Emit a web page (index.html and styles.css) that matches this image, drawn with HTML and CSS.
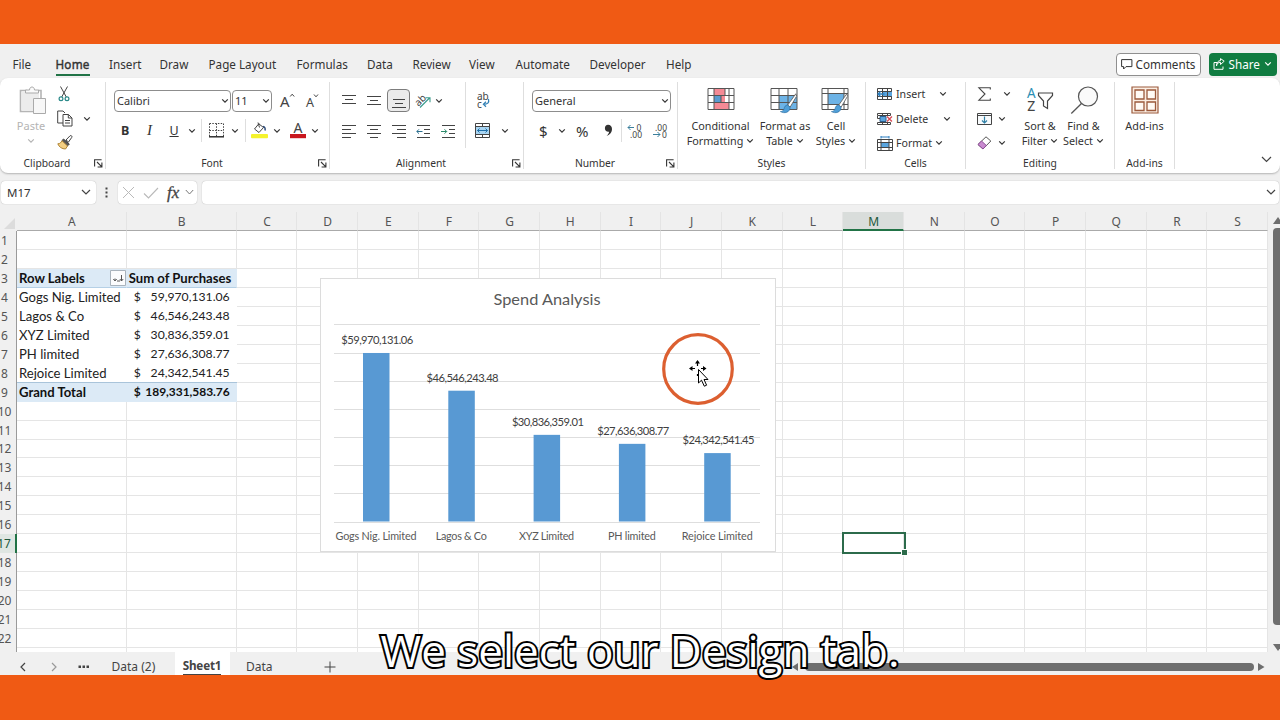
FILE: index.html
```html
<!DOCTYPE html>
<html lang="en">
<head>
  <meta charset="UTF-8">
  <meta name="viewport" content="width=device-width, initial-scale=1.0">
  <title>Spend Analysis</title>
  <link rel="stylesheet" href="styles.css">
</head>
<body>
  <!-- shared icons -->
  <svg class="defs">
    <symbol id="chev" viewBox="0 0 8 6"><path d="M1.2 1.4 4 4.2 6.8 1.4" fill="none" stroke="currentColor" stroke-width="1.2"/></symbol>
    <symbol id="launch" viewBox="0 0 9 9"><path d="M.6 7.5V.8h7M3 3l4.6 4.6M7.9 3.6V8H3.6" fill="none" stroke="#333" stroke-width="1.1"/></symbol>
    <symbol id="brush" viewBox="0 0 20 26"><path d="M19 1 9 15l3 2.5L20 4z" fill="#fff" stroke="#555"/><path d="M9 15c-3 0-4 2-4.500 4.500C4 22 2 23 0 23c5 3 12 1 12-5.500z" fill="#4f9fd8" stroke="#2c6da0" stroke-width=".8"/></symbol>
  </svg>

  <div class="screen">
    <div class="tabs">
      <span>File</span>
      <span class="active">Home</span>
      <span>Insert</span>
      <span>Draw</span>
      <span>Page Layout</span>
      <span>Formulas</span>
      <span>Data</span>
      <span>Review</span>
      <span>View</span>
      <span>Automate</span>
      <span>Developer</span>
      <span>Help</span>
      <button class="comments">
        <svg width="12" height="11" viewBox="0 0 12 11"><path d="M.6.6h10.300v7H5L2.600 10V7.600h-2z" fill="none" stroke="#333"/></svg>
        Comments
      </button>
      <button class="share">
        <svg width="12" height="12" viewBox="0 0 12 12"><path d="M4 4.500H1v6.800h9V8.500M3.500 8c.3-2.500 1.800-3.700 4-3.700V6.500l3.700-3.300L7.500.6v2C5 2.700 3.500 4.500 3.500 8z" fill="none" stroke="#fff"/></svg>
        Share
        <svg class="chev"><use href="#chev"/></svg>
      </button>
    </div>

    <div class="ribbon">
      <section class="group clipboard">
        <div class="tools">
          <div class="paste">
            <svg width="28" height="30" viewBox="0 0 28 30"><path d="M8 4.500H1.500v21H14M19 4.500h3V12" fill="none" stroke="#b5b5b5" stroke-width="1.600"/><path d="M3 6h17v6h-6v12H3z" fill="#ececec"/><path d="M6.500 7V4h4c0-4 5-4 5 0h4v3z" fill="#fafafa" stroke="#aaa"/><path d="M14.500 12.500h12v15h-12z" fill="#f7f7f7" stroke="#aaa"/></svg>
            <span>Paste</span>
            <svg class="chev"><use href="#chev"/></svg>
          </div>
          <div class="clip-col">
            <svg width="12" height="16" viewBox="0 0 12 16"><path d="M2.500.5 8.300 11M9.500.5 3.700 11" stroke="#444" fill="none"/><circle cx="3" cy="12.700" r="1.900" fill="none" stroke="#2b8a8a" stroke-width="1.200"/><circle cx="9" cy="12.700" r="1.900" fill="none" stroke="#2b8a8a" stroke-width="1.200"/></svg>
            <div class="copy">
              <svg width="16" height="17" viewBox="0 0 16 17"><path d="M6 13H.7V1H6l2 2" fill="none" stroke="#444"/><path d="M6 4.500h5.500L15 8v8H6zM11.300 4.500V8H15M8 10.500h5M8 13h5" fill="#fff" stroke="#444"/></svg>
              <svg class="chev"><use href="#chev"/></svg>
            </div>
            <svg width="16" height="15" viewBox="0 0 16 15"><path d="m9 5 4-4.200c1-.8 2.600.4 1.700 1.700L11.500 7z" fill="#fff" stroke="#444"/><path d="m6.500 4 5.800 5-1.600 1.800L5 5.500z" fill="#555" stroke="#444"/><path d="M5 5.800 10.500 11 8.500 14C5 14 2 12 .8 8.800 3 8.800 4 7.500 5 5.800z" fill="#f3cf83" stroke="#b08536"/></svg>
          </div>
        </div>
        <div class="label"><span>Clipboard</span><svg class="launch"><use href="#launch"/></svg></div>
      </section>

      <section class="group font">
        <div class="row row-top font-top">
          <div class="select">Calibri <svg class="chev"><use href="#chev"/></svg></div>
          <div class="select">11 <svg class="chev"><use href="#chev"/></svg></div>
          <svg width="18" height="22" viewBox="0 0 18 22"><text x="1" y="17" font-size="15" fill="#444">A</text><path d="m11.200 6.500 2-2.300 2 2.300" fill="none" stroke="#444"/></svg>
          <svg width="18" height="22" viewBox="0 0 18 22"><text x="2" y="17" font-size="12.500" fill="#444">A</text><path d="m10 4.500 2 2.300 2-2.300" fill="none" stroke="#444"/></svg>
        </div>
        <div class="row row-bottom font-bottom">
          <b>B</b>
          <i>I</i>
          <u>U</u>
          <svg class="chev"><use href="#chev"/></svg>
          <hr>
          <svg width="15" height="15" viewBox="0 0 15 15"><path d="M.5.500h14M.5 7.500h14M.5.500v13M7.500.500v13M14.500.500v13" stroke="#444" stroke-dasharray="1.500 1.300" fill="none"/><path d="M0 13.800h15" stroke="#222" stroke-width="1.400"/></svg>
          <svg class="chev"><use href="#chev"/></svg>
          <hr>
          <svg width="17" height="17" viewBox="0 0 17 17"><path d="M8 1.500 3.500 7 8 10.500 12.500 5.500 8 2M7 .5l1.500 5" fill="none" stroke="#444"/><path d="M12 4.500c1.800 0 2.500 2 2 4" fill="none" stroke="#2c4a78" stroke-width="1.500"/><rect y="12" width="17" height="4.200" rx="1" fill="#f5f32c"/></svg>
          <svg class="chev"><use href="#chev"/></svg>
          <svg width="16" height="21" viewBox="0 -4 16 21"><text x="3.500" y="10.500" font-size="14" fill="#444">A</text><rect y="12" width="16" height="4.200" fill="#c8171e"/></svg>
          <svg class="chev"><use href="#chev"/></svg>
        </div>
        <div class="label"><span>Font</span><svg class="launch"><use href="#launch"/></svg></div>
      </section>

      <section class="group alignment">
        <div class="align-tools">
          <div class="align-left">
            <div class="row row-top align-top">
              <svg width="14" height="14" viewBox="0 0 14 14"><path d="M0 1.500h14M3 5.500h8M0 9.500h14" stroke="#444"/></svg>
              <svg width="14" height="14" viewBox="0 0 14 14"><path d="M0 2.500h14M3 6.500h8M0 10.500h14" stroke="#444"/></svg>
              <span class="pressed"><svg width="14" height="14" viewBox="0 0 14 14"><path d="M1 5.500h12M3 9.500h8M0 13.500h14" stroke="#444"/></svg></span>
              <svg width="18" height="17" viewBox="0 0 18 17"><text x="1" y="12" font-size="10" fill="#444" transform="rotate(-45 6 9)">ab</text><path d="m6 15.500 9.500-9.500M11.500 5.800H16v4.500" fill="none" stroke="#3b9c8c" stroke-width="1.100"/></svg>
              <svg class="chev"><use href="#chev"/></svg>
            </div>
            <div class="row row-bottom align-bottom">
              <svg width="14" height="14" viewBox="0 0 14 14"><path d="M0 1.500h14M0 5.500h9M0 9.500h14M0 13.500h9" stroke="#444"/></svg>
              <svg width="14" height="14" viewBox="0 0 14 14"><path d="M0 1.500h14M3 5.500h8M0 9.500h14M3 13.500h8" stroke="#444"/></svg>
              <svg width="14" height="14" viewBox="0 0 14 14"><path d="M0 1.500h14M5 5.500h9M0 9.500h14M5 13.500h9" stroke="#444"/></svg>
              <svg width="14" height="14" viewBox="0 0 14 14"><path d="M1 1.500h13M8 5.500h6M8 9.500h6M1 13.500h13" stroke="#444"/><path d="M6.500 7.500H.8M3 5.300.8 7.500 3 9.700" stroke="#2c6f8f" fill="none"/></svg>
              <svg width="14" height="14" viewBox="0 0 14 14"><path d="M1 1.500h13M8 5.500h6M8 9.500h6M1 13.500h13" stroke="#444"/><path d="M0 7.500h5.700M3.500 5.300 5.700 7.500 3.500 9.700" stroke="#2b8a6a" fill="none"/></svg>
            </div>
          </div>
          <div class="align-right">
            <div class="row row-top wrap-row">
              <svg width="17" height="26" viewBox="0 0 17 26"><text x="2" y="12" font-size="10" fill="#444">ab</text><text x="2" y="19.500" font-size="10" fill="#444">c</text><path d="M13.500 11c1 4-1 5.300-5 5.300M11 13.800l-2.600 2.500L11 18.800" fill="none" stroke="#2f7fb5" stroke-width="1.200"/></svg>
            </div>
            <div class="row row-bottom wrap-row">
              <svg width="15" height="15" viewBox="0 0 15 15"><path d="M.5.500h14v14H.5z" fill="#fff" stroke="#444"/><path d="M1 4h13v7H1z" fill="#a9d5f2"/><path d="M.5 3.500h14M.5 11.500h14M7.500.500v3M7.500 11.500v3" stroke="#444"/><path d="M2.500 7.500h10M4.500 5.500l-2 2 2 2M10.500 5.500l2 2-2 2" fill="none" stroke="#1f6fa8"/></svg>
              <svg class="chev"><use href="#chev"/></svg>
            </div>
          </div>
        </div>
        <div class="label"><span>Alignment</span><svg class="launch"><use href="#launch"/></svg></div>
      </section>

      <section class="group number">
        <div class="row row-top num-top">
          <div class="select">General <svg class="chev"><use href="#chev"/></svg></div>
        </div>
        <div class="row row-bottom num-bottom">
          <span class="sym">$</span>
          <svg class="chev"><use href="#chev"/></svg>
          <span class="sym">%</span>
          <svg width="9" height="13" viewBox="0 0 9 13"><path d="M4 .8C6.500.8 8 2.500 8 5c0 3.500-2.500 6-5.500 7 1.600-1.600 2.500-3 2.600-4.300C2.500 8 .9 6.500.9 4.200.9 2.200 2.200.8 4 .8z" fill="#333"/></svg>
          <hr>
          <svg width="17" height="20" viewBox="0 0 17 20"><text x="9.500" y="9.500" font-size="8.500" fill="#444">0</text><text x="3" y="17.200" font-size="8.500" fill="#444">.00</text><path d="M7 6.500H1M3.500 4 1 6.500 3.500 9" fill="none" stroke="#3b7f9c"/></svg>
          <svg width="17" height="20" viewBox="0 0 17 20"><text x="3" y="9.500" font-size="8.500" fill="#444">.00</text><text x="10" y="17.200" font-size="8.500" fill="#444">0</text><path d="M1 13.500h7M5.500 11 8 13.500 5.500 16" fill="none" stroke="#3b7f9c"/></svg>
        </div>
        <div class="label"><span>Number</span><svg class="launch"><use href="#launch"/></svg></div>
      </section>

      <section class="group styles">
        <div class="big-tools">
          <div class="big">
            <svg width="28" height="28" viewBox="0 -1 28 28"><path d="M1 1.500h26v21H1z" fill="#fff"/><path d="M7 1.500h11v7H7zM7 15.500h11v7H7zM14 8.500h4v7h-4z" fill="#f58a95"/><path d="M7 8.500h7v7H7z" fill="#5a9bd0"/><path d="M18 15.500h4v7h-4z" fill="#f58a95"/><path d="M1 1.500h26v21H1zM1 8.500h26M1 15.500h26M7 1.500v21M18 1.500v7M14 8.500v7M22 1.500v21" fill="none" stroke="#555"/></svg>
            <span>Conditional</span>
            <span>Formatting <svg class="chev"><use href="#chev"/></svg></span>
          </div>
          <div class="big">
            <svg width="30" height="28" viewBox="0 -1 30 28"><path d="M1 1.500h26v21H1z" fill="#fff"/><path d="M9 8.500h18v14H9z" fill="#6db3e6"/><path d="M1 1.500h26v21H1zM1 8.500h26M1 15.500h26M9 1.500v21M18 1.500v21" fill="none" stroke="#555"/><use href="#brush" x="8" y="6" width="21" height="21"/></svg>
            <span>Format as</span>
            <span>Table <svg class="chev"><use href="#chev"/></svg></span>
          </div>
          <div class="big">
            <svg width="30" height="28" viewBox="0 -1 30 28"><path d="M1 1.500h26v21H1z" fill="#fff"/><path d="M7 6.500h16v11H7z" fill="#6db3e6"/><path d="M1 1.500h26v21H1zM1 6.500h26M1 17.500h26M7 1.500v21M23 1.500v21" fill="none" stroke="#555"/><use href="#brush" x="8" y="6" width="21" height="21"/></svg>
            <span>Cell</span>
            <span>Styles <svg class="chev"><use href="#chev"/></svg></span>
          </div>
        </div>
        <div class="label"><span>Styles</span></div>
      </section>

      <section class="group cells">
        <div class="line-tools">
          <div class="line insert">
            <svg width="16" height="14" viewBox="0 0 16 14"><path d="M.5 1.500h14v11H.5z" fill="#fff" stroke="#444"/><path d="M6 4.500h9v5H6z" fill="#5aa5de"/><path d="M.5 4.500h14M.5 9.500h14M5.500 1.500v11M10.500 1.500v11" stroke="#444" fill="none"/><path d="M7.500 7H1M3.500 4.500 1 7l2.500 2.500" stroke="#2c7fc0" stroke-width="1.400" fill="none"/></svg>
            <span>Insert</span><svg class="chev"><use href="#chev"/></svg>
          </div>
          <div class="line delete">
            <svg width="16" height="14" viewBox="0 0 16 14"><path d="M.5 1.500h13v2H.5zM.5 10.500h13v2H.5zM5.500 1.500v2M10.500 1.500v2M5.500 10.500v2M10.500 10.500v2" fill="none" stroke="#444"/><path d="M3 4.500h6v5H3z" fill="#5aa5de" stroke="#2c5f8f"/><path d="M.5 4v2.500H3" fill="none" stroke="#444"/><path d="m10 4.500 5 5m0-5-5 5" stroke="#d84a54" stroke-width="1.300"/></svg>
            <span>Delete</span><svg class="chev"><use href="#chev"/></svg>
          </div>
          <div class="line format">
            <svg width="16" height="15" viewBox="0 0 16 15"><path d="M.5 3.500h15v11H.5z" fill="#fff" stroke="#444"/><path d="M4 6.500h8v5H4z" fill="#5aa5de"/><path d="M.5 6.500h15M.5 11.500h15M4 3.500v11M12 3.500v11" stroke="#444"/><path d="M4 1h8M4 0v2.500M12 0v2.500" stroke="#2c7fc0"/></svg>
            <span>Format</span><svg class="chev"><use href="#chev"/></svg>
          </div>
        </div>
        <div class="label"><span>Cells</span></div>
      </section>

      <section class="group editing">
        <div class="edit-tools">
          <div class="edit-col">
            <div class="edit-row sum"><svg width="13" height="14" viewBox="0 0 13 14"><path d="M12.300 2.500V.8H.9L7 7 .9 13.200h11.400v-1.800" fill="none" stroke="#444" stroke-width="1.100"/></svg><svg class="chev"><use href="#chev"/></svg></div>
            <div class="edit-row"><svg width="15" height="14" viewBox="0 0 15 14"><path d="M.5 1.500h14v11H.5zM.5 3.500h14" fill="#f7fafc" stroke="#444"/><path d="M7.500 4.500v6.500M5 8.500 7.500 11 10 8.500" fill="none" stroke="#2f7fa5" stroke-width="1.200"/></svg><svg class="chev"><use href="#chev"/></svg></div>
            <div class="edit-row"><svg width="15" height="14" viewBox="0 0 15 14"><path d="M9 .8 13.800 5 6 13 1 8.500z" fill="#fff" stroke="#555"/><path d="M4.500 5 9.300 9.500 6 13 1 8.500z" fill="#c98bd0" stroke="#8f4f99"/></svg><svg class="chev"><use href="#chev"/></svg></div>
          </div>
          <div class="big">
            <svg width="28" height="28" viewBox="0 0 28 28"><text x="1" y="12" font-size="13.500" fill="#2b8fb5">A</text><text x="1.200" y="25" font-size="14" fill="#444">Z</text><path d="M12.500 7h14v2.500L21.500 15v7.500L17.500 20v-5l-5-5.500z" fill="none" stroke="#444" stroke-width="1.200"/></svg>
            <span>Sort &amp;</span>
            <span>Filter <svg class="chev"><use href="#chev"/></svg></span>
          </div>
          <div class="big">
            <svg width="28" height="28" viewBox="0 0 28 28"><circle cx="18" cy="10.500" r="9.500" fill="#fafafa" stroke="#555" stroke-width="1.200"/><path d="M11.500 17.500 1.300 27.500" stroke="#555" stroke-width="1.300"/></svg>
            <span>Find &amp;</span>
            <span>Select <svg class="chev"><use href="#chev"/></svg></span>
          </div>
        </div>
        <div class="label"><span>Editing</span></div>
      </section>

      <section class="group addins">
        <div class="big">
          <svg width="28" height="28" viewBox="0 0 28 28"><path d="M1 1h26v26H1z" fill="#fbeee3" stroke="#9c5a3c" stroke-width="1.200"/><path d="M4 4h9v9H4zM16 4h8.500v9H16zM4 16h9v8.500H4zM16 16h8.500v8.500H16z" fill="#fffaf5" stroke="#9c5a3c" stroke-width="1.300"/></svg>
          <span>Add-ins</span>
        </div>
        <div class="label"><span>Add-ins</span></div>
      </section>

      <svg class="collapse" width="11" height="7" viewBox="0 0 11 7"><path d="m1 1 4.500 4.500L10 1" fill="none" stroke="#444" stroke-width="1.200"/></svg>
    </div>

    <div class="formula-bar">
      <div class="name-box">M17 <svg width="10" height="7" viewBox="0 0 10 7"><path d="m1 1 4 4 4-4" fill="none" stroke="#444" stroke-width="1.200"/></svg></div>
      <svg class="dots" width="3" height="11" viewBox="0 0 3 11"><path d="M.5.500h2v2h-2zM.5 4.500h2v2h-2zM.5 8.500h2v2h-2z" fill="#444"/></svg>
      <div class="fx-box">
        <svg width="13" height="13" viewBox="0 0 13 13"><path d="m1 1 11 11M12 1 1 12" stroke="#b9b9b9"/></svg>
        <svg width="16" height="12" viewBox="0 0 16 12"><path d="m1 6.500 4.500 4.500L15 1" fill="none" stroke="#b9b9b9" stroke-width="1.100"/></svg>
        <em>fx</em>
        <svg width="9" height="7" viewBox="0 0 9 7"><path d="m.8 1 3.700 4 3.700-4" fill="none" stroke="#777"/></svg>
      </div>
      <div class="formula"><svg width="10" height="7" viewBox="0 0 10 7"><path d="m1 1 4 4 4-4" fill="none" stroke="#444" stroke-width="1.200"/></svg></div>
    </div>

    <div class="workspace">
      <div class="sheet" id="sheet"></div>
      <div class="vscroll">
        <svg width="10" height="7" viewBox="0 0 10 7"><path d="M5 0l5 7H0z" fill="#6e6e6e"/></svg>
        <div class="vthumb"></div>
        <svg width="10" height="7" viewBox="0 0 10 7"><path d="M5 7l5-7H0z" fill="#6e6e6e"/></svg>
      </div>

      <div class="active-cell"></div>
      <svg class="chart" id="chart" width="456" height="274" viewBox="0 0 456 274"></svg>
    </div>

    <div class="bottom-bar">
      <svg width="6" height="10" viewBox="0 0 6 10"><path d="M5 1 1 5l4 4" fill="none" stroke="#444" stroke-width="1.200"/></svg>
      <svg width="6" height="10" viewBox="0 0 6 10"><path d="m1 1 4 4-4 4" fill="none" stroke="#999" stroke-width="1.200"/></svg>
      <svg width="12" height="4" viewBox="0 0 12 4"><path d="M.5.500h2.500V3H.5zM4.500.500H7V3H4.500zM8.500.500H11V3H8.500z" fill="#444"/></svg>
      <span>Data (2)</span>
      <span class="current"><b>Sheet1</b></span>
      <span class="last">Data</span>
      <svg width="12" height="12" viewBox="0 0 12 12"><path d="M6 .5v11M.5 6h11" stroke="#444"/></svg>
      <svg width="7" height="8" viewBox="0 0 7 8"><path d="M0 4l6-4v8z" fill="#6e6e6e"/></svg>
      <div class="hthumb"></div>
      <svg width="7" height="8" viewBox="0 0 7 8"><path d="M6.500 4 0 0v8z" fill="#6e6e6e"/></svg>
    </div>
  </div>

  <svg class="pointer" width="74" height="74" viewBox="0 0 74 74">
    <circle cx="37" cy="37" r="34.300" fill="none" stroke="#dc5f30" stroke-width="3.200"/>
    <path d="M36.500 29v5M36.500 42v2M29 36.500h5M40 36.500h5" stroke="#000" stroke-width="1.200"/>
    <path d="m34 31.500 2.500-3.500 2.500 3.500zM31.500 34 28 36.500l3.500 2.500zM42 34l3.500 2.500L42 39z" fill="#000"/>
    <path d="M37.500 37.500V51l3-2.800 2.800 6 2.300-1-2.600-5.700h4z" fill="#fff" stroke="#000"/>
  </svg>

  <div class="caption">We select our Design tab.</div>

  <script>
    const columns = "ABCDEFGHIJKLMNOPQRS".split("");
    const rowCount = 23;
    const purchases = [
      { name: "Gogs Nig. Limited", value: 59970131.06 },
      { name: "Lagos & Co", value: 46546243.48 },
      { name: "XYZ Limited", value: 30836359.01 },
      { name: "PH limited", value: 27636308.77 },
      { name: "Rejoice Limited", value: 24342541.45 },
    ];
    const total = 189331583.76;

    function money(value) {
      return value.toLocaleString("en-US", { minimumFractionDigits: 2, maximumFractionDigits: 2 });
    }

    function addCell(className, html) {
      const cell = document.createElement("div");
      cell.className = className;
      cell.innerHTML = html || "";
      document.getElementById("sheet").appendChild(cell);
    }

    function drawSheet() {
      addCell("corner", '<svg width="11" height="11" viewBox="0 0 11 11"><path d="M11 0v11H0z" fill="#dcdcdc"/></svg>');
      columns.forEach((c) => addCell(c === "M" ? "col-head selected" : "col-head", c));

      for (let r = 1; r <= rowCount; r++) {
        addCell(r === 17 ? "row-head selected" : "row-head", r < 23 ? String(r) : "");
        columns.forEach((c) => {
          const item = purchases[r - 4];
          if (c === "A" && r === 3) {
            addCell("cell pivot-head", '<span>Row Labels</span><svg class="filter" width="16" height="16" viewBox="0 0 16 16"><path d="M.5.500h15v15H.5z" fill="#fbfcfd" stroke="#a9b3bc"/><path d="M5 8.500v2M3.300 9l1.700 2 1.700-2M7 11h3M11.500 5v6M9.800 9l1.700 2 1.700-2" fill="none" stroke="#555"/></svg>');
          } else if (c === "B" && r === 3) {
            addCell("cell pivot-head", "<span>Sum of Purchases</span>");
          } else if (c === "A" && item) {
            addCell("cell pivot", item.name.replace("&", "&amp;"));
          } else if (c === "B" && item) {
            addCell("cell pivot amount", `<span>$</span><span>${money(item.value)}</span>`);
          } else if (c === "A" && r === 9) {
            addCell("cell pivot-total", "Grand Total");
          } else if (c === "B" && r === 9) {
            addCell("cell pivot-total amount", `<span>$</span><span>${money(total)}</span>`);
          } else {
            addCell("cell");
          }
        });
      }
    }

    function drawChart() {
      const base = 243.5;
      const labelWidths = [81, 51, 55, 48, 71];
      let svg = '<rect class="frame" x=".5" y=".5" width="455" height="273"/>';
      svg += '<text class="title" x="227" y="27" textLength="107" lengthAdjust="spacingAndGlyphs">Spend Analysis</text>';
      for (let i = 0; i < 8; i++) {
        svg += `<path class="gridline" d="M14 ${Math.round(base - i * 28.15)}.5h426"/>`;
      }
      purchases.forEach((p, i) => {
        const x = 43 + i * 85.3;
        const h = p.value / 10000000 * 28.1;
        svg += `<rect class="bar" x="${x}" y="${base - h}" width="26.500" height="${h}"/>`;
        svg += `<text class="value" x="${x + 14.3}" y="${base - h - 8.700}" textLength="72">$${money(p.value)}</text>`;
        svg += `<text class="name" x="${x + 13}" y="261.500" textLength="${labelWidths[i]}">${p.name.replace("&", "&amp;")}</text>`;
      });
      document.getElementById("chart").innerHTML = svg;
    }

    drawSheet();
    drawChart();
  </script>
</body>
</html>
```

FILE: styles.css
```css
* {
  box-sizing: border-box;
}

body {
  margin: 0;
  width: 1280px;
  height: 720px;
  overflow: hidden;
  background: #f05a14;
  padding-top: 44px;
  font-family: "Noto Sans", sans-serif;
  color: #333;
  position: relative;
}

svg {
  display: block;
  overflow: visible;
}

.defs {
  display: none;
}

.screen {
  height: 631px;
  background: #f0f0f0;
  display: flex;
  flex-direction: column;
  overflow: hidden;
}

.chev {
  width: 8px;
  height: 6px;
}

/* menu tabs */
.tabs {
  height: 34px;
  flex: none;
  display: grid;
  grid-template-columns: 43px 53.500px 50.500px 49px 88px 70.500px 45.500px 56.500px 46.500px 74px 76.500px 449.500px 93px 67px;
  padding-left: 12.500px;
  align-items: center;
  font-size: 11.700px;
  white-space: nowrap;
}

.tabs span {
  justify-self: start;
  height: 22px;
  line-height: 19px;
  margin-top: 9px;
}

.tabs .active {
  -webkit-text-stroke: 0.4px #333;
  letter-spacing: 0.2px;
  height: 21px;
  margin-top: 8px;
  border-bottom: 2px solid #217346;
}

.tabs button {
  font: inherit;
  height: 23px;
  margin-top: 6px;
  display: flex;
  align-items: center;
  border-radius: 4px;
}

.comments {
  width: 85px;
  padding: 0 0 0 4px;
  gap: 3px;
  border: 1px solid #8f8f8f;
  background: #fff;
  color: #333;
}

.share {
  width: 68px;
  padding: 0 0 0 4px;
  gap: 4px;
  border: none;
  background: #107c41;
  color: #fff;
}

/* ribbon */
.ribbon {
  height: 95px;
  flex: none;
  background: #fff;
  border-radius: 8px;
  box-shadow: 0 1px 2px rgba(0, 0, 0, 0.25);
  padding-top: 4px;
  display: flex;
  font-size: 11px;
  position: relative;
}

.group {
  height: 87px;
  border-right: 1px solid #dedede;
  display: flex;
  flex-direction: column;
}

.label {
  margin-top: auto;
  height: 12px;
  display: flex;
  align-items: center;
  font-size: 10.300px;
  color: #333;
}

.label span {
  flex: 1;
  text-align: center;
}

.launch {
  width: 9px;
  height: 9px;
  margin: 1px 2px 0 0;
}

.row {
  display: grid;
  align-items: center;
}

.row-top {
  height: 37px;
}

.row-bottom {
  height: 25px;
  margin-top: -1px;
}

.row hr {
  width: 1px;
  height: 23px;
  margin: 0;
  border: none;
  background: #dedede;
}

.select {
  height: 22px;
  border: 1px solid #8d8d8d;
  border-radius: 4px;
  display: flex;
  align-items: center;
  justify-content: space-between;
  padding: 0 1px 0 2px;
}

.clipboard { width: 106px; }
.font { width: 224px; }
.alignment { width: 194px; }
.number { width: 154px; }
.styles { width: 188px; }
.cells { width: 100px; }
.editing { width: 149px; }
.addins { width: 60px; }

.tools {
  display: flex;
  padding-left: 12px;
}

.paste {
  width: 38px;
  margin-right: 7px;
  padding-top: 4px;
  display: flex;
  flex-direction: column;
  align-items: center;
  color: #b4b4b4;
}

.paste svg:first-child {
  margin-left: 4px;
}

.paste span {
  line-height: 20px;
  margin-bottom: 2px;
}

.clip-col {
  display: flex;
  flex-direction: column;
  gap: 8px;
  padding-top: 4px;
}

.clip-col > svg:first-child {
  margin-left: 1px;
}

.copy {
  display: flex;
  align-items: center;
  gap: 10px;
}

.font-top {
  grid-template-columns: 117px 41px 7px 25px 20px;
  padding-left: 8px;
}

.font-top .select:nth-child(2) {
  margin-left: 1px;
}

.font-top svg:nth-child(3) {
  grid-column: 4;
}

.font-bottom {
  grid-template-columns: 25px 23.500px 18px 13px 8px 22px 14px 6px 22px 17px 21px 8px;
  padding-left: 15px;
  font-size: 12.500px;
}

.font-bottom i {
  font-family: "Liberation Serif", serif;
  font-size: 15px;
  padding-left: 1px;
}

.font-bottom svg:nth-child(11) {
  margin-top: -4px;
}

.align-tools {
  display: flex;
}

.align-left {
  width: 136px;
  height: 66px;
  border-right: 1px solid #dedede;
  padding-left: 12px;
}

.align-top {
  grid-template-columns: 25px 20px 27px 21px 8px;
}

.pressed {
  width: 23px;
  height: 23px;
  border: 1px solid #7d7d7d;
  border-radius: 4px;
  background: #ebebeb;
  padding: 4px;
}

.align-bottom {
  grid-template-columns: 25px 25px 24px 25px 14px;
}

.align-right {
  padding-left: 9px;
}

.wrap-row {
  grid-template-columns: 26px 8px;
}

.num-top {
  grid-template-columns: 139px;
  padding-left: 8px;
}

.num-bottom {
  grid-template-columns: 19px 18px 28px 17px 6px 25px 16px;
  padding-left: 15px;
}

.sym {
  font-size: 15px;
  line-height: 20px;
}

.big-tools {
  display: grid;
  grid-template-columns: 75px 54px 48px;
  padding-left: 5px;
}

.big {
  display: flex;
  flex-direction: column;
  align-items: center;
  padding-top: 4px;
  font-size: 10.800px;
  white-space: nowrap;
}

.big > svg {
  height: 28px;
  margin-bottom: 4px;
}

.big span {
  display: flex;
  align-items: center;
  gap: 3px;
  line-height: 15px;
}

.line-tools {
  padding: 0 0 0 11px;
  font-size: 10.600px;
}

.line {
  height: 24.500px;
  display: grid;
  grid-template-columns: 19px 43px 8px;
  align-items: center;
}

.line.delete {
  grid-template-columns: 19px 47px 8px;
}

.line.format {
  grid-template-columns: 19px 39px 8px;
}

.edit-tools {
  display: grid;
  grid-template-columns: 52px 44px 43px;
}

.edit-col {
  padding: 0 0 0 11px;
}

.edit-row {
  height: 24.500px;
  display: grid;
  grid-template-columns: 21px 8px;
  align-items: center;
}

.edit-row.sum {
  grid-template-columns: 25px 8px;
  padding-left: 1px;
}

.collapse {
  position: absolute;
  right: 8px;
  bottom: 10px;
}

/* formula bar */
.formula-bar {
  margin-top: 8px;
  height: 23px;
  flex: none;
  display: flex;
  align-items: center;
}

.name-box,
.fx-box,
.formula {
  height: 23px;
  background: #fff;
  border-radius: 4px;
  box-shadow: 0 0 1px rgba(0, 0, 0, 0.35);
  display: flex;
  align-items: center;
}

.name-box {
  width: 95px;
  margin-left: 1px;
  padding: 0 5px 0 6px;
  justify-content: space-between;
  font-size: 11.500px;
}

.dots {
  margin: 0 10px 0 9px;
}

.fx-box {
  width: 79px;
  padding-left: 4px;
  gap: 8px;
}

.fx-box em {
  font: italic 17px "Liberation Serif", serif;
  -webkit-text-stroke: 0.3px #444;
  width: 13px;
  color: #444;
}

.fx-box svg:last-child {
  margin-left: -3px;
}

.formula {
  flex: 1;
  margin-left: 5px;
  margin-right: 1px;
  justify-content: flex-end;
  padding-right: 3px;
}

/* sheet */
.workspace {
  margin-top: 8px;
  height: 440px;
  flex: none;
  display: flex;
  position: relative;
  overflow: hidden;
}

.sheet {
  width: 1268px;
  display: grid;
  grid-template-columns: 17px 109.700px 110px repeat(17, 60.670px);
  grid-template-rows: 19.200px;
  grid-auto-rows: 18.950px;
  font-family: Lato, sans-serif;
  font-size: 13.100px;
  overflow: hidden;
}

.col-head,
.row-head,
.corner {
  display: flex;
  align-items: center;
  justify-content: center;
  font-family: "Noto Sans", sans-serif;
  font-size: 12px;
  color: #555;
}

.corner {
  padding: 4px 0 0 1px;
}

.col-head {
  border-bottom: 1px solid #aaa;
  border-right: 1px solid #e4e4e4;
  padding: 1px 0 0 1px;
}

.col-head.selected {
  background: #d9dddb;
  border-bottom: 2px solid #217346;
  color: #21593c;
}

.row-head {
  padding-right: 7px;
  border-right: 1px solid #9a9a9a;
}

.row-head.selected {
  background: #dfe6e2;
  border-right: 2px solid #217346;
  color: #21593c;
}

.cell {
  background: #fff;
  border-right: 1px solid #e5e5e5;
  border-bottom: 1px solid #e5e5e5;
  padding-left: 2px;
  display: flex;
  align-items: center;
  color: #222;
  white-space: nowrap;
}

.pivot {
  border-color: #fff;
}

.pivot-head,
.pivot-total {
  background: #dceaf6;
  border-color: #dceaf6;
  font-weight: bold;
  color: #111;
}

.pivot-head {
  justify-content: space-between;
  border-bottom-color: #b5d0e6;
}

.pivot-total {
  box-shadow: 0 -1px 0 #a9c4da;
}

.amount {
  justify-content: space-between;
  padding: 0 6px 0 7px;
  font-size: 12.200px;
}

.pivot-total.amount {
  font-size: 12px;
  letter-spacing: -0.050px;
}

.filter {
  margin-right: 0;
}

.vscroll {
  flex: 1;
  padding: 5px 0 0 5px;
  overflow: hidden;
}

.vthumb {
  width: 10px;
  height: 397px;
  margin: 4px 0 19px;
  border-radius: 4px;
  background: #6e6e6e;
}

.active-cell {
  position: absolute;
  left: 842px;
  top: 320px;
  width: 64px;
  height: 22px;
  border: 2px solid #2c6b4b;
}

.active-cell::after {
  content: "";
  position: absolute;
  right: -3px;
  bottom: -3px;
  width: 5px;
  height: 5px;
  background: #2c6b4b;
  outline: 1px solid #fff;
}

/* chart */
.chart {
  position: absolute;
  left: 320px;
  top: 66px;
  font-family: Lato, sans-serif;
  text-anchor: middle;
}

.frame {
  fill: #fff;
  stroke: #dcdcdc;
}

.title {
  font-size: 16px;
  fill: #595959;
}

.gridline {
  stroke: #dedede;
}

.bar {
  fill: #5899d3;
}

.value {
  font-size: 11.200px;
  fill: #404040;
}

.name {
  font-size: 10.800px;
  fill: #595959;
}

/* sheet tabs */
.bottom-bar {
  flex: 1;
  display: grid;
  grid-template-columns: 31px 27px 34px 63px 71.500px 78px 468px 13px 453px 7px;
  padding-left: 19.500px;
  align-items: center;
  font-size: 12px;
  padding-top: 6px;
  color: #444;
}

.bottom-bar span {
  line-height: 16px;
  margin-top: 1px;
}

.bottom-bar .current {
  width: 55px;
  height: 23px;
  margin-top: -6px;
  background: #fff;
  text-align: center;
  padding-top: 5px;
  font-size: 11.700px;
  letter-spacing: -0.200px;
}

.current b {
  display: inline-block;
  height: 18px;
  border-bottom: 1px solid #444;
}

.hthumb {
  width: 449px;
  height: 8px;
  border-radius: 4px;
  background: #6e6e6e;
}

.pointer {
  position: absolute;
  left: 661px;
  top: 332px;
}

.caption {
  position: absolute;
  left: 0;
  right: 0;
  top: 618px;
  text-align: center;
  font-family: "Open Sans", sans-serif;
  font-size: 44px;
  line-height: 64px;
  color: #fff;
  -webkit-text-stroke: 4px #000;
  paint-order: stroke fill;
}
```
